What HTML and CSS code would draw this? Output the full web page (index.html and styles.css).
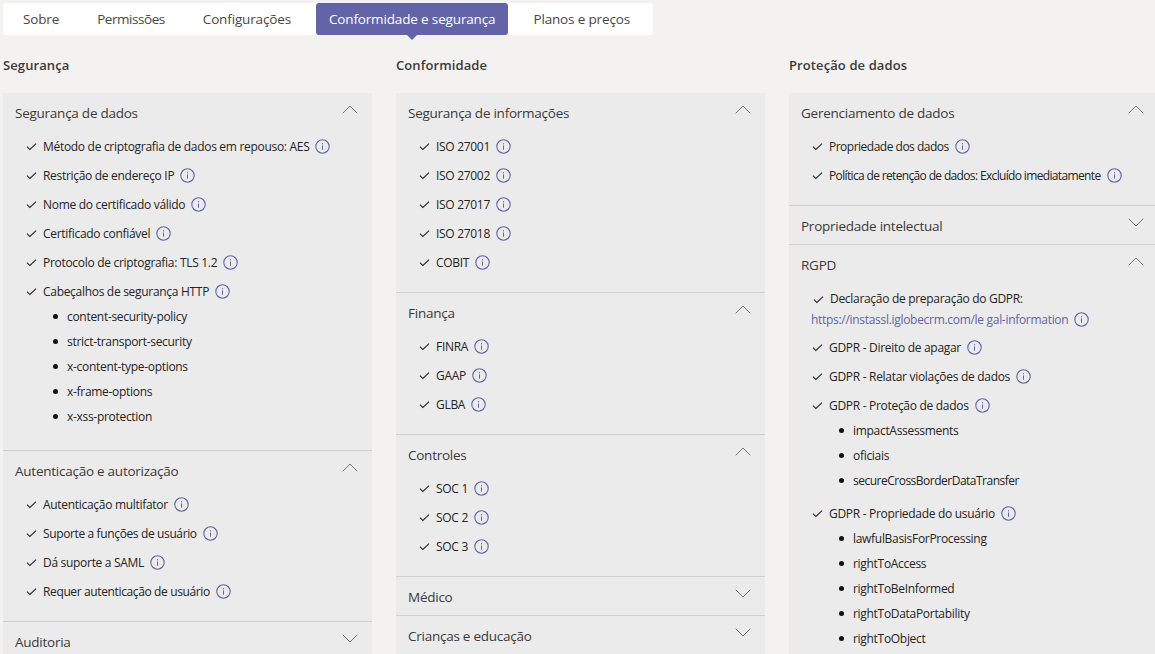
FILE: index.html
```html
<!DOCTYPE html>
<html lang="pt-BR">
<head>
  <meta charset="UTF-8" />
  <title>Conformidade e segurança</title>
  <link rel="stylesheet" href="styles.css">
</head>
<body>
  <svg class="defs" aria-hidden="true">
    <symbol id="check" viewBox="0 0 12 12"><path d="M1 6.2 4.2 9.2 11 2.8" fill="none" stroke="currentColor" stroke-width="1.1"/></symbol>
    <symbol id="up" viewBox="0 0 16 9"><path d="M.7 8.3 8 1l7.3 7.3" fill="none" stroke="currentColor" stroke-width="1"/></symbol>
    <symbol id="down" viewBox="0 0 16 9"><path d="M.7.7 8 8l7.3-7.3" fill="none" stroke="currentColor" stroke-width="1"/></symbol>
    <symbol id="info" viewBox="0 0 15 15"><circle cx="7.5" cy="7.5" r="6.7" fill="none" stroke="currentColor" stroke-width="1.1"/><rect x="7" y="6.5" width="1" height="4.2" fill="currentColor"/><rect x="7" y="4.2" width="1" height="1.2" fill="currentColor"/></symbol>
  </svg>

  <nav class="tabs">
    <a class="tab">Sobre</a>
    <a class="tab tab-narrow">Permissões</a>
    <a class="tab">Configurações</a>
    <a class="tab active">Conformidade e segurança</a>
    <a class="tab">Planos e preços</a>
  </nav>

  <main class="columns">
    <section>
      <h2>Segurança</h2>
      <div class="panel">
        <div class="group">
          <div class="group-head">Segurança de dados <svg class="chev"><use href="#up"/></svg></div>
          <ul class="items">
            <li><svg class="check"><use href="#check"/></svg>Método de criptografia de dados em repouso: AES<svg class="info"><use href="#info"/></svg></li>
            <li><svg class="check"><use href="#check"/></svg>Restrição de endereço IP<svg class="info"><use href="#info"/></svg></li>
            <li><svg class="check"><use href="#check"/></svg>Nome do certificado válido<svg class="info"><use href="#info"/></svg></li>
            <li><svg class="check"><use href="#check"/></svg>Certificado confiável<svg class="info"><use href="#info"/></svg></li>
            <li><svg class="check"><use href="#check"/></svg>Protocolo de criptografia: TLS 1.2<svg class="info"><use href="#info"/></svg></li>
            <li><svg class="check"><use href="#check"/></svg>Cabeçalhos de segurança HTTP<svg class="info"><use href="#info"/></svg></li>
          </ul>
          <ul class="sub">
            <li>content-security-policy</li>
            <li>strict-transport-security</li>
            <li>x-content-type-options</li>
            <li>x-frame-options</li>
            <li>x-xss-protection</li>
          </ul>
        </div>
        <div class="group">
          <div class="group-head">Autenticação e autorização <svg class="chev"><use href="#up"/></svg></div>
          <ul class="items">
            <li><svg class="check"><use href="#check"/></svg>Autenticação multifator<svg class="info"><use href="#info"/></svg></li>
            <li><svg class="check"><use href="#check"/></svg><span class="snug">Suporte a funções de usuário</span><svg class="info"><use href="#info"/></svg></li>
            <li><svg class="check"><use href="#check"/></svg>Dá suporte a SAML<svg class="info"><use href="#info"/></svg></li>
            <li><svg class="check"><use href="#check"/></svg><span class="snug">Requer autenticação de usuário</span><svg class="info"><use href="#info"/></svg></li>
          </ul>
        </div>
        <div class="group closed">
          <div class="group-head">Auditoria <svg class="chev"><use href="#down"/></svg></div>
        </div>
      </div>
    </section>

    <section>
      <h2>Conformidade</h2>
      <div class="panel">
        <div class="group">
          <div class="group-head">Segurança de informações <svg class="chev"><use href="#up"/></svg></div>
          <ul class="items">
            <li><svg class="check"><use href="#check"/></svg>ISO 27001<svg class="info"><use href="#info"/></svg></li>
            <li><svg class="check"><use href="#check"/></svg>ISO 27002<svg class="info"><use href="#info"/></svg></li>
            <li><svg class="check"><use href="#check"/></svg>ISO 27017<svg class="info"><use href="#info"/></svg></li>
            <li><svg class="check"><use href="#check"/></svg>ISO 27018<svg class="info"><use href="#info"/></svg></li>
            <li><svg class="check"><use href="#check"/></svg>COBIT<svg class="info"><use href="#info"/></svg></li>
          </ul>
        </div>
        <div class="group">
          <div class="group-head">Finança <svg class="chev"><use href="#up"/></svg></div>
          <ul class="items">
            <li><svg class="check"><use href="#check"/></svg>FINRA<svg class="info"><use href="#info"/></svg></li>
            <li><svg class="check"><use href="#check"/></svg>GAAP<svg class="info"><use href="#info"/></svg></li>
            <li><svg class="check"><use href="#check"/></svg>GLBA<svg class="info"><use href="#info"/></svg></li>
          </ul>
        </div>
        <div class="group">
          <div class="group-head">Controles <svg class="chev"><use href="#up"/></svg></div>
          <ul class="items">
            <li><svg class="check"><use href="#check"/></svg>SOC 1<svg class="info"><use href="#info"/></svg></li>
            <li><svg class="check"><use href="#check"/></svg>SOC 2<svg class="info"><use href="#info"/></svg></li>
            <li><svg class="check"><use href="#check"/></svg>SOC 3<svg class="info"><use href="#info"/></svg></li>
          </ul>
        </div>
        <div class="group closed">
          <div class="group-head">Médico <svg class="chev"><use href="#down"/></svg></div>
        </div>
        <div class="group closed">
          <div class="group-head">Crianças e educação <svg class="chev"><use href="#down"/></svg></div>
        </div>
      </div>
    </section>

    <section>
      <h2>Proteção de dados</h2>
      <div class="panel">
        <div class="group">
          <div class="group-head">Gerenciamento de dados <svg class="chev"><use href="#up"/></svg></div>
          <ul class="items">
            <li><svg class="check"><use href="#check"/></svg><span class="tight">Propriedade dos dados</span><svg class="info"><use href="#info"/></svg></li>
            <li><svg class="check"><use href="#check"/></svg><span class="tightest">Política de retenção de dados: Excluído imediatamente</span><svg class="info"><use href="#info"/></svg></li>
          </ul>
        </div>
        <div class="group closed">
          <div class="group-head">Propriedade intelectual <svg class="chev"><use href="#down"/></svg></div>
        </div>
        <div class="group">
          <div class="group-head">RGPD <svg class="chev"><use href="#up"/></svg></div>
          <div class="statement">
            <div><svg class="check"><use href="#check"/></svg>Declaração de preparação do GDPR:</div>
            <div class="statement-link"><a>https://instassl.iglobecrm.com/le gal-information</a><svg class="info"><use href="#info"/></svg></div>
          </div>
          <ul class="items">
            <li><svg class="check"><use href="#check"/></svg>GDPR - Direito de apagar<svg class="info"><use href="#info"/></svg></li>
            <li><svg class="check"><use href="#check"/></svg>GDPR - Relatar violações de dados<svg class="info"><use href="#info"/></svg></li>
            <li><svg class="check"><use href="#check"/></svg>GDPR - Proteção de dados<svg class="info"><use href="#info"/></svg></li>
          </ul>
          <ul class="sub">
            <li>impactAssessments</li>
            <li>oficiais</li>
            <li><span class="tight">secureCrossBorderDataTransfer</span></li>
          </ul>
          <ul class="items">
            <li><svg class="check"><use href="#check"/></svg>GDPR - Propriedade do usuário<svg class="info"><use href="#info"/></svg></li>
          </ul>
          <ul class="sub">
            <li>lawfulBasisForProcessing</li>
            <li>rightToAccess</li>
            <li>rightToBeInformed</li>
            <li>rightToDataPortability</li>
            <li>rightToObject</li>
          </ul>
        </div>
      </div>
    </section>
  </main>
</body>
</html>
```

FILE: styles.css
```css
:root {
  --bg-color: #f3f2f1;
  --panel-bg: #ebebeb;
  --text-color: #252423;
  --accent: #6264a7;
  --divider: #d1d1d1;
}
* {
  box-sizing: border-box;
  margin: 0;
  padding: 0;
}
html,
body {
  height: 654px;
  overflow: hidden;
}
body {
  background-color: var(--bg-color);
  color: var(--text-color);
  font-family: "Open Sans", "Noto Sans", sans-serif;
  font-size: 12px;
  letter-spacing: -0.3px;
  padding: 3px 0 0 3px;
}
.defs {
  display: none;
}
.tabs {
  display: flex;
  gap: 12px;
  width: 650px;
  height: 32px;
  padding-left: 7px;
  background-color: #fff;
  border-radius: 3px;
}
.tab {
  position: relative;
  display: flex;
  align-items: center;
  padding: 0 13px;
  font-size: 13.5px;
  letter-spacing: -0.15px;
  white-space: nowrap;
  color: #484644;
}
.tab-narrow {
  letter-spacing: -0.45px;
}
.tab.active {
  background-color: var(--accent);
  color: #fff;
  border-radius: 3px;
}
.tab.active::after {
  content: "";
  position: absolute;
  top: 100%;
  left: 50%;
  margin-left: -5px;
  border: 5px solid transparent;
  border-bottom: 0;
  border-top-color: var(--accent);
}
.columns {
  display: grid;
  grid-template-columns: repeat(3, 369px);
  gap: 24px;
}
h2 {
  height: 58px;
  padding-top: 20px;
  font-size: 13px;
  line-height: 20px;
  font-weight: 600;
  letter-spacing: 0.1px;
  color: #3b3a39;
}
.panel {
  background-color: var(--panel-bg);
}
.group {
  padding-bottom: 15px;
  border-bottom: 1px solid var(--divider);
}
.group.closed {
  padding-bottom: 0;
}
.group-head {
  display: flex;
  align-items: center;
  justify-content: space-between;
  height: 39px;
  padding: 1px 14px 0 12px;
  font-size: 13.5px;
  letter-spacing: -0.25px;
  color: #3b3a39;
}
.closed .group-head {
  height: 38px;
  padding-top: 2px;
}
.chev {
  width: 16px;
  height: 9px;
  margin-bottom: 7px;
  color: #767574;
}
.items li {
  display: flex;
  align-items: center;
  height: 29px;
  padding-left: 23px;
  list-style: none;
}
.check {
  flex: none;
  width: 11px;
  height: 11px;
  margin-right: 6px;
  color: #252423;
}
.info {
  flex: none;
  width: 15px;
  height: 15px;
  margin-left: 6px;
  color: var(--accent);
}
.snug {
  letter-spacing: -0.37px;
}
.tight {
  letter-spacing: -0.5px;
}
.tightest {
  letter-spacing: -0.65px;
}
.sub {
  margin-top: -2px;
  padding: 0 0 6px 64px;
}
.sub li {
  height: 25px;
  line-height: 25px;
  list-style: none;
  position: relative;
}
.sub li::before {
  content: "";
  position: absolute;
  left: -14px;
  top: 10px;
  width: 5px;
  height: 5px;
  border-radius: 50%;
  background-color: #111;
}
.statement {
  padding: 4px 0 3px 22px;
  line-height: 21px;
}
.statement svg.check {
  vertical-align: -2px;
  margin-left: 2px;
  margin-right: 6px;
}
.statement-link {
  display: flex;
  align-items: center;
}
.statement-link a {
  color: var(--accent);
}
```
